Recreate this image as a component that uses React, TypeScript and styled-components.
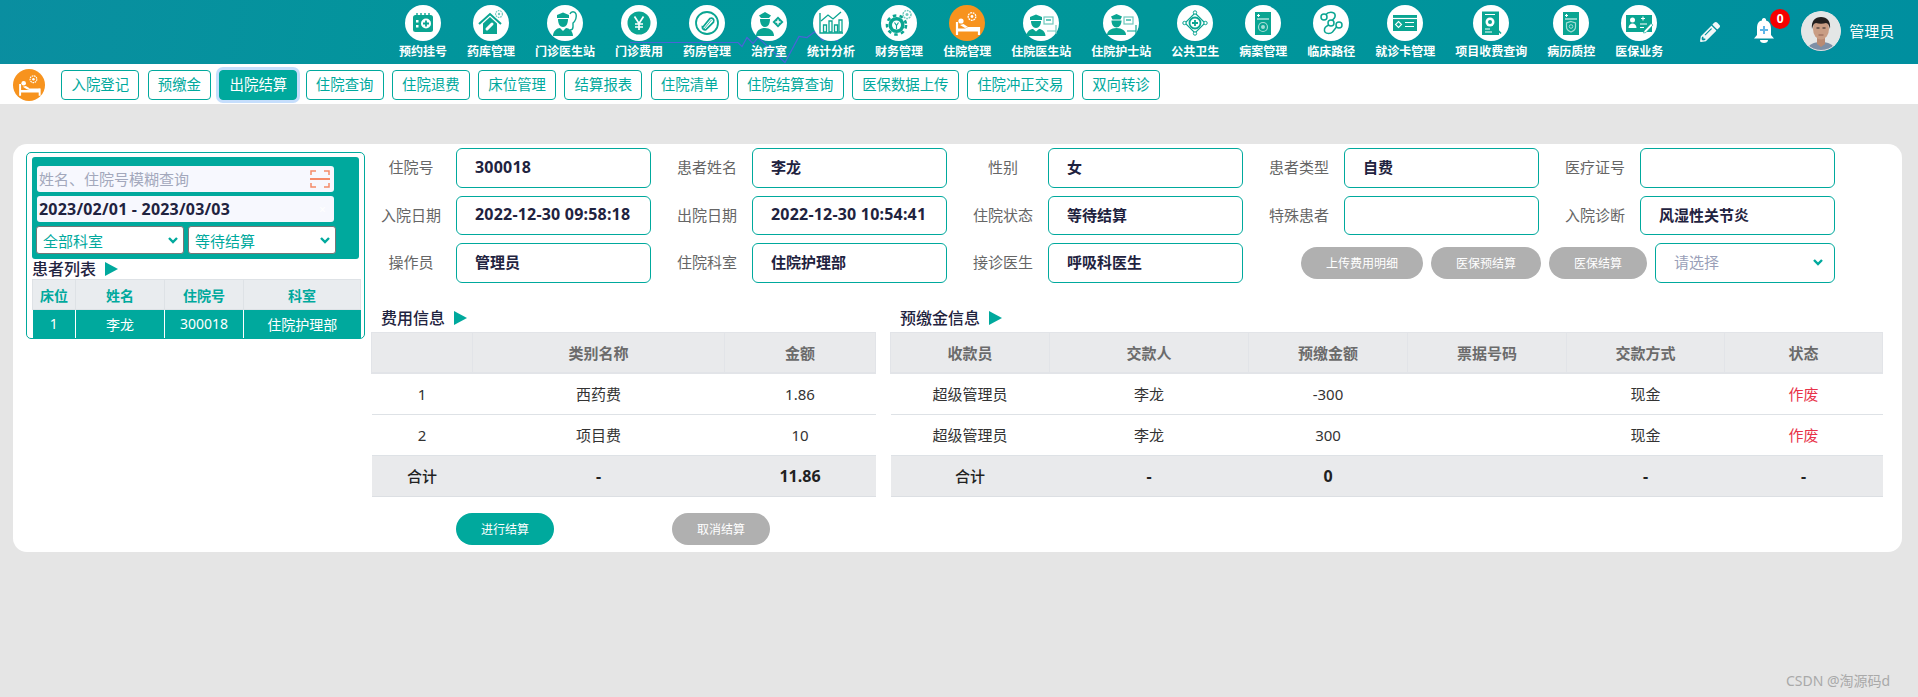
import React from "react";
import styled, { createGlobalStyle } from "styled-components";
import { FaPencilAlt } from "react-icons/fa";

const TEAL = "#00a99d";
const INK = "#1f2340";

const GlobalStyle = createGlobalStyle`
	html, body {
		margin: 0;
		padding: 0;
		background: #e5e5e5;
		font-family: "Noto Sans", "Noto Sans CJK SC", sans-serif;
	}
	* {
		box-sizing: border-box;
	}
`;

const Page = styled.div`
	position: relative;
	width: 1918px;
	height: 697px;
	overflow: hidden;
	background: #e5e5e5;
`;

/* top bar */
const Header = styled.header`
	position: relative;
	display: flex;
	height: 64px;
	padding-left: 399px;
	background: linear-gradient(100deg, #0a8ea0 0%, #00979b 30%, #00969a 60%, #008f9f 100%);
`;

const Decor = styled.svg`
	position: absolute;
	left: 0;
	top: 0;
	pointer-events: none;
`;

const NavList = styled.nav`
	position: relative;
	display: flex;
	gap: 20px;
`;

const NavItem = styled.div`
	display: flex;
	flex-direction: column;
	align-items: center;
	padding-top: 5px;
`;

const NavCircle = styled.div<{ $active?: boolean; $size?: number }>`
	display: flex;
	width: ${(p) => p.$size ?? 36}px;
	height: ${(p) => p.$size ?? 36}px;
	flex: none;
	border-radius: 50%;
	background: ${(p) => (p.$active ? "#f7931e" : "#fff")};
	svg {
		width: 100%;
		height: 100%;
	}
`;

const NavLabel = styled.span`
	margin-top: 3px;
	color: #fff;
	font-size: 12px;
	line-height: 16px;
	font-weight: 700;
	white-space: nowrap;
`;

const Tools = styled.div`
	position: relative;
	display: flex;
	align-items: center;
	margin-left: 37px;
	color: #f1f7f8;
`;

const Bell = styled.div`
	position: relative;
	width: 20px;
	height: 26px;
	margin-left: 34px;
	margin-top: -2px;
	svg {
		display: block;
	}
`;

const Badge = styled.span`
	position: absolute;
	left: 16px;
	top: -9px;
	width: 20px;
	height: 20px;
	border-radius: 50%;
	background: #f60000;
	color: #fff;
	font-size: 12px;
	font-weight: 700;
	line-height: 20px;
	text-align: center;
`;

const Avatar = styled.svg`
	width: 40px;
	height: 40px;
	margin-left: 27px;
	margin-top: -2px;
	border-radius: 50%;
`;

const UserName = styled.span`
	margin-left: 8px;
	margin-top: -3px;
	color: #fff;
	font-size: 15px;
`;

/* tab strip */
const SubNav = styled.div`
	display: flex;
	align-items: center;
	gap: 8.3px;
	height: 40px;
	padding-left: 13px;
	padding-top: 1px;
	background: #fff;
`;

const TabIcon = styled.div`
	margin-right: 8px;
`;

const Tab = styled.button<{ $active?: boolean }>`
	height: 30px;
	padding: 0 9.2px;
	border: 1px solid ${TEAL};
	border-radius: 4px;
	background: ${(p) => (p.$active ? TEAL : "#fff")};
	box-shadow: ${(p) => (p.$active ? "0 0 0 3px #c6defc" : "none")};
	color: ${(p) => (p.$active ? "#fff" : TEAL)};
	font-family: inherit;
	font-size: 14.4px;
	line-height: 28px;
	white-space: nowrap;
`;

/* main card */
const Card = styled.main`
	display: flex;
	width: 1889px;
	height: 408px;
	margin: 40px 0 0 13px;
	padding: 4px 0 0 13px;
	border-radius: 14px;
	background: #fff;
`;

const PatientPanel = styled.section`
	width: 339px;
	height: 187px;
	margin-top: 4px;
	padding: 4px 5px 0;
	border: 1px solid ${TEAL};
	border-radius: 5px;
`;

const FilterBox = styled.div`
	display: flex;
	flex-direction: column;
	gap: 4px;
	height: 102px;
	padding: 9px 0 0 5px;
	border-radius: 3px;
	background: ${TEAL};
`;

const SearchWrap = styled.div`
	display: flex;
	align-items: center;
	justify-content: space-between;
	width: 297px;
	height: 26px;
	padding: 0 4px 0 2px;
	border-radius: 3px;
	background: #f7f8fe;
`;

const SearchInput = styled.input`
	flex: 1;
	min-width: 0;
	padding: 0;
	border: 0;
	outline: 0;
	background: transparent;
	color: ${INK};
	font-family: inherit;
	font-size: 15px;
	&::placeholder {
		color: #a3a8bc;
		opacity: 1;
	}
`;

const DateText = styled(SearchWrap)`
	color: ${INK};
	font-size: 16px;
	font-weight: 700;
	letter-spacing: 0.2px;
`;

const ClearMark = styled.span`
	margin-right: 4px;
	color: #fff;
	font-size: 12px;
	font-weight: 400;
`;

const SelectRow = styled.div`
	display: flex;
	gap: 4px;
	margin-left: -1px;
`;

const MiniSelect = styled.div`
	display: flex;
	align-items: center;
	justify-content: space-between;
	width: 148px;
	height: 28px;
	padding: 0 4px 0 6px;
	border: 1px solid #777;
	border-radius: 3px;
	background: #fff;
	color: ${TEAL};
	font-size: 15px;
`;

const SectionTitle = styled.h3<{ $indent?: number }>`
	display: flex;
	align-items: center;
	gap: 9px;
	height: 20px;
	margin: 0;
	padding-left: ${(p) => p.$indent ?? 0}px;
	color: ${INK};
	font-size: 16px;
	font-weight: 500;
	line-height: 20px;
`;

const Arrow = styled.i`
	width: 0;
	height: 0;
	border-style: solid;
	border-width: 7px 0 7px 13px;
	border-color: transparent transparent transparent ${TEAL};
`;

const PatientTable = styled.table`
	width: 328px;
	margin-top: 0;
	border-collapse: collapse;
	table-layout: fixed;
	font-size: 14px;
	th {
		height: 30px;
		padding: 0;
		border: 1px solid #dee2e6;
		background: #e9ecef;
		color: ${TEAL};
		font-weight: 700;
	}
	td {
		height: 28px;
		padding: 0;
		border-left: 1px solid #fff;
		background: ${TEAL};
		color: #fff;
		text-align: center;
	}
	td:first-child {
		border-left: 0;
	}
`;

const Right = styled.section`
	display: flex;
	flex-direction: column;
	margin-left: 1px;
`;

const FormGrid = styled.div`
	display: grid;
	grid-template-columns: repeat(5, 285px);
	grid-auto-rows: 39.5px;
	column-gap: 11px;
	row-gap: 8px;
`;

const Field = styled.label`
	display: flex;
	align-items: center;
`;

const FieldLabel = styled.span`
	width: 90px;
	flex: none;
	padding-bottom: 2px;
	color: #666;
	font-size: 15px;
	text-align: center;
`;

const FieldInput = styled.input<{ $latin?: boolean }>`
	width: 195px;
	height: 39.5px;
	padding: 0 18px 2px;
	border: 1px solid ${TEAL};
	border-radius: 6px;
	outline: 0;
	background: #fff;
	color: ${INK};
	font-family: inherit;
	font-size: ${(p) => (p.$latin ? 16 : 15)}px;
	letter-spacing: ${(p) => (p.$latin ? 0.2 : 0)}px;
	font-weight: 700;
`;

const ActionCell = styled.div`
	grid-column: 4 / span 2;
	display: flex;
	align-items: center;
	gap: 8px;
	padding-left: 47px;
`;

const Pill = styled.button<{ $width: number; $primary?: boolean }>`
	width: ${(p) => p.$width}px;
	height: 32px;
	padding: 0;
	border: 0;
	border-radius: 16px;
	background: ${(p) => (p.$primary ? TEAL : "#b0b0b0")};
	color: #fff;
	font-family: inherit;
	font-size: 12px;
`;

const PlainSelect = styled.div`
	display: flex;
	align-items: center;
	justify-content: space-between;
	width: 180px;
	height: 39.5px;
	padding: 0 10px 2px 18px;
	border: 1px solid ${TEAL};
	border-radius: 6px;
	color: #9a9fb8;
	font-size: 15px;
`;

const TablesRow = styled.div`
	display: flex;
	gap: 15px;
	margin: 25px 0 0 5px;
`;

const InfoBlock = styled.div<{ $width: number }>`
	width: ${(p) => p.$width}px;
`;

const InfoTable = styled.table`
	width: 100%;
	margin-top: 4px;
	border-collapse: collapse;
	table-layout: fixed;
	font-size: 15px;
	th, td {
		height: 41px;
		padding: 0;
		text-align: center;
	}
	th {
		border: 1px solid #dee2e6;
		border-width: 1px 1px 2px;
		border-color: #e2e4e8;
		background: #e9eaec;
		color: #6b6b6b;
		font-weight: 600;
	}
	td {
		border-bottom: 1px solid #dee2e6;
		color: #333;
	}
	tfoot td {
		background: #e9eaec;
		color: #222;
		font-weight: 500;
		border-bottom: 1px solid #dcdfe3;
	}
	tfoot td b {
		font-size: 16px;
		font-weight: 700;
	}
`;

const Voided = styled.span`
	color: #e8334a;
`;

const SettleActions = styled.div`
	display: flex;
	gap: 118px;
	margin: 16px 0 0 85px;
`;

const Watermark = styled.div`
	position: absolute;
	left: 1786px;
	top: 672px;
	color: #a9a9a9;
	font-size: 14px;
	line-height: 18px;
	white-space: nowrap;
`;

/* icons, all on a 36 box */
const T = "#0aa592";
const PALE = "#6fc9bd";
const MIST = "#a5ddd5";

const icons: Record<string, React.ReactNode> = {
	calendar: (
		<>
			<rect x="8" y="10" width="20" height="17" rx="2.5" fill={T} />
			<path d="M12 8v3M16 8v3M20 8v3M24 8v3" stroke={T} strokeWidth="1.4" />
			<circle cx="21" cy="18.5" r="5" fill="#fff" />
			<path d="M21 15.5v6M18 18.5h6" stroke={T} strokeWidth="1.8" />
			<path d="M11 15h2.5v2.5H11zM11 20h2.5v2.5H11z" fill="#fff" />
		</>
	),
	house: (
		<>
			<path d="M6 19 17 9l11 10" fill="none" stroke={T} strokeWidth="2" />
			<path d="M10 18.5 17 12l7 6.5V29H10z" fill={T} />
			<path d="m14 24 5-5" stroke="#fff" strokeWidth="3" strokeLinecap="round" />
			<circle cx="26" cy="9" r="3.4" fill="none" stroke={PALE} strokeWidth="1.2" strokeDasharray="1.6 .8" />
			<circle cx="26" cy="9" r="1.2" fill={PALE} />
		</>
	),
	doctor: (
		<>
			<path d="M10 10 16 7.500l6 2.500v3H10z" fill={T} />
			<path d="M11 14h10c0 5-2 8-5 8s-5-3-5-8z" fill={T} />
			<path d="M6 31c0-5 4-8 7-8l3 3 3-3c3 0 7 3 7 8z" fill={T} />
			<path d="M23 9c1-3 5-3 6 0s-.5 7-3 9v4c0 2-1 3-3 3" fill="none" stroke={T} strokeWidth="1.4" />
		</>
	),
	yen: (
		<>
			<circle cx="18" cy="18" r="11.5" fill={T} />
			<path d="m13.5 11.5 4.5 7 4.5-7M18 18.5V25M14 19h8M14 22h8" fill="none" stroke="#fff" strokeWidth="1.7" />
		</>
	),
	pill: (
		<>
			<circle cx="18" cy="18" r="11" fill="none" stroke={T} strokeWidth="1.8" />
			<path d="m14 22 7-8.500a2.600 2.600 0 0 1 3.500 3.600L17 24.600a2.600 2.600 0 0 1-3.600-2.800z" fill="none" stroke={T} strokeWidth="1.8" />
			<path d="m15 24 7.500-9" stroke={T} strokeWidth=".8" />
		</>
	),
	nurse: (
		<>
			<path d="M8 10.500 14 7l6 3.500-2 2.500h-8z" fill={T} />
			<path d="M9 14h10c0 5-2 8-5 8s-5-3-5-8z" fill={T} />
			<path d="M5 31c0-5 4-8 9-8s9 3 9 8z" fill={T} />
			<path d="m27 11.500 5.500 5.500-5.500 5.500-5.500-5.500z" fill={T} />
			<path d="M27 14.500v5M24.500 17h5" stroke="#fff" strokeWidth="1.4" />
		</>
	),
	chart: (
		<>
			<path d="M7 8v20h23" fill="none" stroke={T} strokeWidth="1.4" />
			<path d="M10.500 20h3v7h-3zM16 16h3v11h-3zM21.500 20h3v7h-3zM26 15h3v12h-3z" fill="none" stroke={T} strokeWidth="1.3" />
			<path d="m8 16 7-6 5 4 8-7" fill="none" stroke={T} strokeWidth="1.3" />
		</>
	),
	gear: (
		<>
			<circle cx="15.500" cy="20" r="8" fill={T} />
			<circle cx="15.500" cy="20" r="9.500" fill="none" stroke={T} strokeWidth="2.6" strokeDasharray="3.500 3.300" />
			<circle cx="15.500" cy="20" r="4.500" fill="#fff" />
			<path d="m13.500 17.500 2 3 2-3M15.500 20.500V24" fill="none" stroke={T} strokeWidth="1.1" />
			<circle cx="26" cy="9.500" r="4" fill="none" stroke={PALE} strokeWidth="1.5" strokeDasharray="1.800 .8" />
			<circle cx="26" cy="9.500" r="1.500" fill={PALE} />
		</>
	),
	bed: (
		<>
			<path d="M8 17v13M30 22v8" stroke="#fff" strokeWidth="2.2" />
			<path d="M8 26.500h22V22H19l-3 1.500H8z" fill="#fff" />
			<circle cx="12" cy="16" r="2.6" fill="#fff" />
			<path d="m11 20 5 3 3-1-4.500-3z" fill="#fff" />
			<circle cx="23" cy="11.500" r="3.8" fill="none" stroke="#fff" strokeWidth="1.3" strokeDasharray="1.800 .8" />
			<circle cx="23" cy="11.500" r="1.4" fill="#fff" />
		</>
	),
	doctorScreen: (
		<>
			<path d="M7 12 13 9.500l6 2.500v3H7z" fill={T} />
			<path d="M8 16h10c0 4-2 7-5 7s-5-3-5-7z" fill={T} />
			<path d="M3.500 31c0-4.500 4-7 6.500-7l3 2.500L16 24c2.500 0 6.500 2.500 6.500 7z" fill={T} />
			<rect x="21" y="12" width="9" height="7" fill="none" stroke={PALE} strokeWidth="1.2" />
			<path d="M23 15h5" stroke={T} strokeWidth="1.2" />
			<path d="M24 26h9M33 20v9" stroke={PALE} strokeWidth="1.2" />
		</>
	),
	nurseScreen: (
		<>
			<path d="M8 11.500 13.500 9l5.500 2.500-1.500 3h-8z" fill={T} />
			<path d="M8.500 15.500h10c0 4-2 7-5 7s-5-3-5-7z" fill={T} />
			<path d="M4 30c0-4 4-7 9.500-7s9.500 3 9.500 7z" fill={T} />
			<rect x="21" y="12" width="9" height="7" fill="none" stroke={PALE} strokeWidth="1.2" />
			<path d="M23 15h5" stroke={T} strokeWidth="1.2" />
			<path d="M24 26h9M33 20v9" stroke={T} strokeWidth="1.2" />
		</>
	),
	diamond: (
		<>
			<path d="m18 8 10 10-10 10L8 18z" fill="none" stroke={T} strokeWidth="1.2" />
			<circle cx="18" cy="18" r="5.500" fill="none" stroke={T} strokeWidth="1.8" />
			<path d="M18 15v6M15 18h6" stroke={T} strokeWidth="1.8" />
			<circle cx="18" cy="7.500" r="1.7" fill="#fff" stroke={T} />
			<circle cx="18" cy="28.500" r="1.7" fill="#fff" stroke={T} />
			<circle cx="7.500" cy="18" r="1.7" fill="#fff" stroke={T} />
			<circle cx="28.500" cy="18" r="1.7" fill="#fff" stroke={T} />
		</>
	),
	record: (
		<>
			<rect x="10" y="7" width="16" height="23" fill={T} />
			<path d="M12 10.500h3M13.500 9v3M12 14h12" stroke="#fff" strokeWidth="1.1" />
			<circle cx="18" cy="22" r="4.500" fill="none" stroke={MIST} strokeWidth="1.2" />
			<circle cx="18" cy="22" r="2" fill={MIST} />
		</>
	),
	path: (
		<>
			<circle cx="11" cy="12" r="3" fill="none" stroke={T} strokeWidth="1.5" />
			<circle cx="18" cy="18" r="3" fill="none" stroke={T} strokeWidth="1.5" />
			<circle cx="26" cy="20" r="3" fill="none" stroke={T} strokeWidth="1.5" />
			<path d="M13 9.500c2-3 8-3 9 0s-1 4-3 6M16 20c-3 1-5 3-4.500 6s6 3 8 1l4-5" fill="none" stroke={T} strokeWidth="1.5" />
		</>
	),
	card: (
		<>
			<rect x="6" y="10" width="24" height="16" fill={T} />
			<path d="M6 13.500h24" stroke="#fff" strokeWidth="1.2" />
			<path d="m11.500 16.500 3 3-3 3-3-3z" fill="none" stroke="#fff" strokeWidth="1.1" />
			<path d="M18 17.500h9M18 21.500h9" stroke="#fff" strokeWidth="1.1" />
		</>
	),
	inspect: (
		<>
			<rect x="9" y="6.500" width="17" height="23.500" fill={T} />
			<path d="M12 9.500h10M12 27h7M12 24h5" stroke="#fff" strokeWidth="1" />
			<circle cx="17" cy="17" r="4.500" fill="#fff" />
			<circle cx="17" cy="17" r="2" fill={T} />
			<path d="m20.500 20.500 7.500 8" stroke={T} strokeWidth="1.6" />
		</>
	),
	shield: (
		<>
			<rect x="10" y="7" width="16" height="23" fill={T} />
			<path d="M12 10.500h3M13.500 9v3M12 14h12" stroke="#fff" strokeWidth="1.1" />
			<path d="M18 16.500l4.500 1.500v4c0 2.500-2 4-4.500 5-2.500-1-4.500-2.500-4.500-5v-4z" fill="none" stroke={MIST} strokeWidth="1.2" />
			<circle cx="18" cy="21.500" r="1.8" fill="none" stroke={MIST} />
		</>
	),
	cardPen: (
		<>
			<rect x="5" y="10" width="26" height="17" fill={T} />
			<circle cx="11.500" cy="15" r="2.500" fill="#fff" />
			<path d="M7.500 23c0-3 2-4.500 4-4.500s4 1.500 4 4.500z" fill="#fff" />
			<path d="M20 13.500h4M22 11.500v4M19 19h7M19 22.500h4" stroke="#fff" strokeWidth="1.1" />
			<path d="m23 26 7-7.500 2 1.500-7 7.500-2.500.5z" fill="#fff" stroke={T} strokeWidth=".6" />
		</>
	),
};

const NavIcon = ({ name }: { name: string }) => <svg viewBox="0 0 36 36">{icons[name]}</svg>;

const ScanIcon = () => (
	<svg width="20" height="18" viewBox="0 0 20 18" fill="none" stroke="#f58a68" strokeWidth="1.5">
		<path d="M1 5V1h5M14 1h5v4M19 13v4h-5M6 17H1v-4" />
		<path d="M0 9h20" strokeWidth="2" />
	</svg>
);

const Chevron = () => (
	<svg width="12" height="12" viewBox="0 0 12 12" fill="none" stroke={TEAL} strokeWidth="2.4">
		<path d="m2 4 4 4 4-4" />
	</svg>
);

const navItems = [
	["预约挂号", "calendar"],
	["药库管理", "house"],
	["门诊医生站", "doctor"],
	["门诊费用", "yen"],
	["药房管理", "pill"],
	["治疗室", "nurse"],
	["统计分析", "chart"],
	["财务管理", "gear"],
	["住院管理", "bed"],
	["住院医生站", "doctorScreen"],
	["住院护士站", "nurseScreen"],
	["公共卫生", "diamond"],
	["病案管理", "record"],
	["临床路径", "path"],
	["就诊卡管理", "card"],
	["项目收费查询", "inspect"],
	["病历质控", "shield"],
	["医保业务", "cardPen"],
];

const tabs = [
	"入院登记",
	"预缴金",
	"出院结算",
	"住院查询",
	"住院退费",
	"床位管理",
	"结算报表",
	"住院清单",
	"住院结算查询",
	"医保数据上传",
	"住院冲正交易",
	"双向转诊",
];

const fields = [
	["住院号", "300018"],
	["患者姓名", "李龙"],
	["性别", "女"],
	["患者类型", "自费"],
	["医疗证号", ""],
	["入院日期", "2022-12-30 09:58:18"],
	["出院日期", "2022-12-30 10:54:41"],
	["住院状态", "等待结算"],
	["特殊患者", ""],
	["入院诊断", "风湿性关节炎"],
	["操作员", "管理员"],
	["住院科室", "住院护理部"],
	["接诊医生", "呼吸科医生"],
];

const feeCols = [101, 252, 151];
const depositCols = [159, 199, 159, 159, 158, 158];

export default function App() {
	return (
		<Page>
			<GlobalStyle />
			<Header>
				<Decor width="1918" height="64">
					<defs>
						<linearGradient id="glow" x1="0" x2="1" y1="0" y2="0">
							<stop offset="0" stopColor="#1fd03a" stopOpacity="0" />
							<stop offset="1" stopColor="#1fd03a" />
						</linearGradient>
					</defs>
					<path
						d="M630 42.500H738l4 4 5-9 6 6 5-6 27 25 14-26 8 1 8-6 8 9 7-5 8 6"
						fill="none"
						stroke="#4a63d8"
						strokeWidth="1.2"
					/>
					<path d="M840 42.500H1034" stroke="url(#glow)" strokeWidth="1.5" />
				</Decor>
				<NavList>
					{navItems.map(([label, icon]) => (
						<NavItem key={label}>
							<NavCircle $active={icon === "bed"}>
								<NavIcon name={icon} />
							</NavCircle>
							<NavLabel>{label}</NavLabel>
						</NavItem>
					))}
				</NavList>
				<Tools>
					<FaPencilAlt size={20} />
					<Bell>
						<svg width="20" height="26" viewBox="0 0 20 26">
							<path d="M10 0a2 2 0 0 1 2 2.500c3.500 1 5 4 5 8V17l3 3.500H0L3 17v-6.500c0-4.500 1.500-7.500 5-8A2 2 0 0 1 10 0z" fill="#fff" />
							<path d="M6 22h8a4 3 0 0 1-8 0z" fill="#fff" />
							<path d="M10 8v8M6 12h8" stroke="#5db6e8" strokeWidth="2" />
						</svg>
						<Badge>0</Badge>
					</Bell>
					<Avatar viewBox="0 0 40 40">
						<circle cx="20" cy="20" r="20" fill="#e4e6e6" />
						<path d="M6 40c1-7 7-9 14-9s13 2 14 9z" fill="#7d8fa6" />
						<path d="M16 25h8v8l-4 3-4-3z" fill="#b98a72" />
						<ellipse cx="20" cy="18" rx="8" ry="10.500" fill="#c99d84" />
						<path d="M11 18c-1-8 3-12 9-12s10 4 9 12c-1-4-2-6-4-6-3 1-7 1-10 0-2 0-3 2-4 6z" fill="#24201f" />
						<path d="M15.500 17h3M21.500 17h3" stroke="#2a2322" strokeWidth="1.2" />
						<path d="M17.500 24h5" stroke="#8d5f50" />
						<circle cx="20" cy="20" r="19.500" fill="none" stroke="#dfe5e6" />
					</Avatar>
					<UserName>管理员</UserName>
				</Tools>
			</Header>

			<SubNav>
				<TabIcon>
					<NavCircle $active $size={32}>
						<NavIcon name="bed" />
					</NavCircle>
				</TabIcon>
				{tabs.map((tab) => (
					<Tab key={tab} $active={tab === "出院结算"}>
						{tab}
					</Tab>
				))}
			</SubNav>

			<Card>
				<PatientPanel>
					<FilterBox>
						<SearchWrap>
							<SearchInput placeholder="姓名、住院号模糊查询" />
							<ScanIcon />
						</SearchWrap>
						<DateText>
							<span>2023/02/01 - 2023/03/03</span>
							<ClearMark>×</ClearMark>
						</DateText>
						<SelectRow>
							<MiniSelect>
								全部科室
								<Chevron />
							</MiniSelect>
							<MiniSelect>
								等待结算
								<Chevron />
							</MiniSelect>
						</SelectRow>
					</FilterBox>
					<SectionTitle>
						患者列表
						<Arrow />
					</SectionTitle>
					<PatientTable>
						<colgroup>
							<col width={43} />
							<col width={89} />
							<col width={79} />
							<col width={117} />
						</colgroup>
						<thead>
							<tr>
								<th>床位</th>
								<th>姓名</th>
								<th>住院号</th>
								<th>科室</th>
							</tr>
						</thead>
						<tbody>
							<tr>
								<td>1</td>
								<td>李龙</td>
								<td>300018</td>
								<td>住院护理部</td>
							</tr>
						</tbody>
					</PatientTable>
				</PatientPanel>

				<Right>
					<FormGrid>
						{fields.map(([label, value]) => (
							<Field key={label}>
								<FieldLabel>{label}</FieldLabel>
								<FieldInput readOnly value={value} $latin={/^\d/.test(value)} />
							</Field>
						))}
						<ActionCell>
							<Pill $width={122}>上传费用明细</Pill>
							<Pill $width={110}>医保预结算</Pill>
							<Pill $width={98}>医保结算</Pill>
							<PlainSelect>
								请选择
								<Chevron />
							</PlainSelect>
						</ActionCell>
					</FormGrid>

					<TablesRow>
						<InfoBlock $width={504}>
							<SectionTitle $indent={10}>
								费用信息
								<Arrow />
							</SectionTitle>
							<InfoTable>
								<colgroup>
									{feeCols.map((w, i) => (
										<col key={i} width={w} />
									))}
								</colgroup>
								<thead>
									<tr>
										<th></th>
										<th>类别名称</th>
										<th>金额</th>
									</tr>
								</thead>
								<tbody>
									<tr>
										<td>1</td>
										<td>西药费</td>
										<td>1.86</td>
									</tr>
									<tr>
										<td>2</td>
										<td>项目费</td>
										<td>10</td>
									</tr>
								</tbody>
								<tfoot>
									<tr>
										<td>合计</td>
										<td><b>-</b></td>
										<td><b>11.86</b></td>
									</tr>
								</tfoot>
							</InfoTable>
							<SettleActions>
								<Pill $width={98} $primary>进行结算</Pill>
								<Pill $width={98}>取消结算</Pill>
							</SettleActions>
						</InfoBlock>
						<InfoBlock $width={992}>
							<SectionTitle $indent={10}>
								预缴金信息
								<Arrow />
							</SectionTitle>
							<InfoTable>
								<colgroup>
									{depositCols.map((w, i) => (
										<col key={i} width={w} />
									))}
								</colgroup>
								<thead>
									<tr>
										<th>收款员</th>
										<th>交款人</th>
										<th>预缴金额</th>
										<th>票据号码</th>
										<th>交款方式</th>
										<th>状态</th>
									</tr>
								</thead>
								<tbody>
									<tr>
										<td>超级管理员</td>
										<td>李龙</td>
										<td>-300</td>
										<td></td>
										<td>现金</td>
										<td><Voided>作废</Voided></td>
									</tr>
									<tr>
										<td>超级管理员</td>
										<td>李龙</td>
										<td>300</td>
										<td></td>
										<td>现金</td>
										<td><Voided>作废</Voided></td>
									</tr>
								</tbody>
								<tfoot>
									<tr>
										<td>合计</td>
										<td><b>-</b></td>
										<td><b>0</b></td>
										<td></td>
										<td><b>-</b></td>
										<td><b>-</b></td>
									</tr>
								</tfoot>
							</InfoTable>
						</InfoBlock>
					</TablesRow>
				</Right>
			</Card>
			<Watermark>CSDN @淘源码d</Watermark>
		</Page>
	);
}
